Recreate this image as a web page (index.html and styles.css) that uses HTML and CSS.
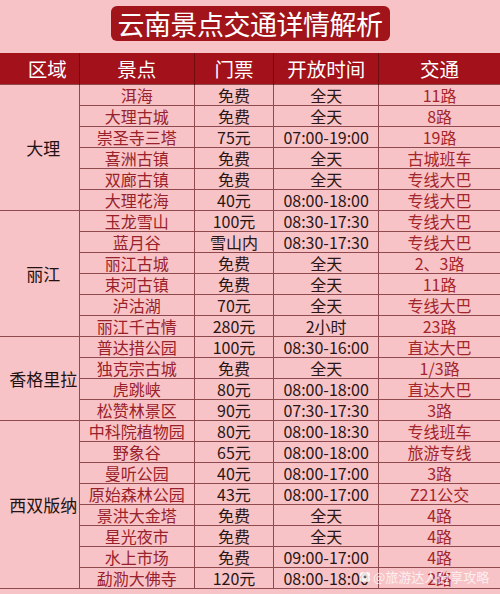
FILE: index.html
```html
<!DOCTYPE html>
<html lang="zh">
<head>
<meta charset="utf-8">
<link rel="stylesheet" href="styles.css">
</head>
<body>
<div class="page">
  <div class="title-wrap"><h1 class="title">云南景点交通详情解析</h1></div>
  <table class="grid">
    <colgroup>
      <col class="c-region"><col class="c-spot"><col class="c-ticket"><col class="c-time"><col class="c-traffic">
    </colgroup>
    <thead>
      <tr><th class="region-h">区域</th><th>景点</th><th>门票</th><th>开放时间</th><th>交通</th></tr>
    </thead>
    <tbody>
      <tr class="sec"><td class="region" rowspan="6">大理</td><td class="spot">洱海</td><td>免费</td><td>全天</td><td class="traffic">11路</td></tr>
      <tr><td class="spot">大理古城</td><td>免费</td><td>全天</td><td class="traffic">8路</td></tr>
      <tr><td class="spot">崇圣寺三塔</td><td>75元</td><td>07:00-19:00</td><td class="traffic">19路</td></tr>
      <tr><td class="spot">喜洲古镇</td><td>免费</td><td>全天</td><td class="traffic">古城班车</td></tr>
      <tr><td class="spot">双廊古镇</td><td>免费</td><td>全天</td><td class="traffic">专线大巴</td></tr>
      <tr><td class="spot">大理花海</td><td>40元</td><td>08:00-18:00</td><td class="traffic">专线大巴</td></tr>

      <tr class="sec"><td class="region" rowspan="6">丽江</td><td class="spot">玉龙雪山</td><td>100元</td><td>08:30-17:30</td><td class="traffic">专线大巴</td></tr>
      <tr><td class="spot">蓝月谷</td><td>雪山内</td><td>08:30-17:30</td><td class="traffic">专线大巴</td></tr>
      <tr><td class="spot">丽江古城</td><td>免费</td><td>全天</td><td class="traffic">2、3路</td></tr>
      <tr><td class="spot">束河古镇</td><td>免费</td><td>全天</td><td class="traffic">11路</td></tr>
      <tr><td class="spot">泸沽湖</td><td>70元</td><td>全天</td><td class="traffic">专线大巴</td></tr>
      <tr><td class="spot">丽江千古情</td><td>280元</td><td>2小时</td><td class="traffic">23路</td></tr>

      <tr class="sec"><td class="region" rowspan="4">香格里拉</td><td class="spot">普达措公园</td><td>100元</td><td>08:30-16:00</td><td class="traffic">直达大巴</td></tr>
      <tr><td class="spot">独克宗古城</td><td>免费</td><td>全天</td><td class="traffic">1/3路</td></tr>
      <tr><td class="spot">虎跳峡</td><td>80元</td><td>08:00-18:00</td><td class="traffic">直达大巴</td></tr>
      <tr><td class="spot">松赞林景区</td><td>90元</td><td>07:30-17:30</td><td class="traffic">3路</td></tr>

      <tr class="sec"><td class="region" rowspan="8">西双版纳</td><td class="spot">中科院植物园</td><td>80元</td><td>08:00-18:30</td><td class="traffic">专线班车</td></tr>
      <tr><td class="spot">野象谷</td><td>65元</td><td>08:00-18:00</td><td class="traffic">旅游专线</td></tr>
      <tr><td class="spot">曼听公园</td><td>40元</td><td>08:00-17:00</td><td class="traffic">3路</td></tr>
      <tr><td class="spot">原始森林公园</td><td>43元</td><td>08:00-17:00</td><td class="traffic">Z21公交</td></tr>
      <tr><td class="spot">景洪大金塔</td><td>免费</td><td>全天</td><td class="traffic">4路</td></tr>
      <tr><td class="spot">星光夜市</td><td>免费</td><td>全天</td><td class="traffic">4路</td></tr>
      <tr><td class="spot">水上市场</td><td>免费</td><td>09:00-17:00</td><td class="traffic">4路</td></tr>
      <tr><td class="spot">勐泐大佛寺</td><td>120元</td><td>08:00-18:00</td><td class="traffic">2路</td></tr>
    </tbody>
  </table>
  <div class="watermark">
    <svg class="wm-icon" width="12" height="12" viewBox="0 0 13 13"><circle cx="4" cy="4" r="3" fill="#fff"/><circle cx="9" cy="4" r="3" fill="#fff"/><circle cx="4" cy="9" r="3" fill="#fff"/><circle cx="9" cy="9" r="3" fill="#fff"/><circle cx="6.5" cy="6.5" r="1.6" fill="#555"/></svg>
    <span>@旅游达人分享攻略</span>
  </div>
</div>
</body>
</html>
```

FILE: styles.css
```css
* { box-sizing: border-box; }
html, body {
  margin: 0;
  padding: 0;
  background: #f8c3c6;
}
body {
  font-family: "Noto Sans CJK SC", "Noto Sans", sans-serif;
  width: 500px;
  height: 594px;
  overflow: hidden;
}
.page {
  position: relative;
  width: 500px;
  height: 594px;
}
.title-wrap {
  display: flex;
  justify-content: center;
  padding-top: 6px;
}
.title {
  margin: 0;
  width: 279px;
  height: 35px;
  background: #a0141a;
  border-radius: 6px;
  color: #fff;
  font-size: 27px;
  font-weight: 400;
  line-height: 35px;
  text-align: center;
  letter-spacing: -0.5px;
}
.grid {
  margin-top: 12px;
  width: 500px;
  table-layout: fixed;
  border-collapse: collapse;
}
.c-region { width: 79px; }
.c-spot { width: 115px; }
.c-ticket { width: 79px; }
.c-time { width: 105px; }
.c-traffic { width: 121px; }
.grid th {
  height: 31px;
  padding: 0;
  background: #a3111a;
  color: #fff;
  font-size: 19.5px;
  font-weight: 400;
  line-height: 31px;
  text-align: center;
  border-left: 1px solid #6e0c10;
}
.grid th:first-child { border-left: none; }
.grid th.region-h { padding-left: 16px; }
.grid td {
  height: 20.7px;
  padding: 0;
  font-size: 16px;
  line-height: 20px;
  text-align: center;
  color: #2b1616;
  border: 1px solid #8e4a4c;
  white-space: nowrap;
  overflow: hidden;
}
.grid td:last-child { border-right: none; }
.grid td.region {
  border-left: none;
  color: #221212;
  font-size: 17px;
  padding-left: 8px;
}
.grid td.spot { color: #98222b; }
.grid td.traffic { color: #a3262b; }
.watermark {
  position: absolute;
  left: 359px;
  top: 569px;
  display: flex;
  align-items: center;
  gap: 2px;
  color: rgba(255, 255, 255, 0.75);
  font-size: 13px;
  line-height: 16px;
}
.wm-icon { opacity: 0.85; }
```
